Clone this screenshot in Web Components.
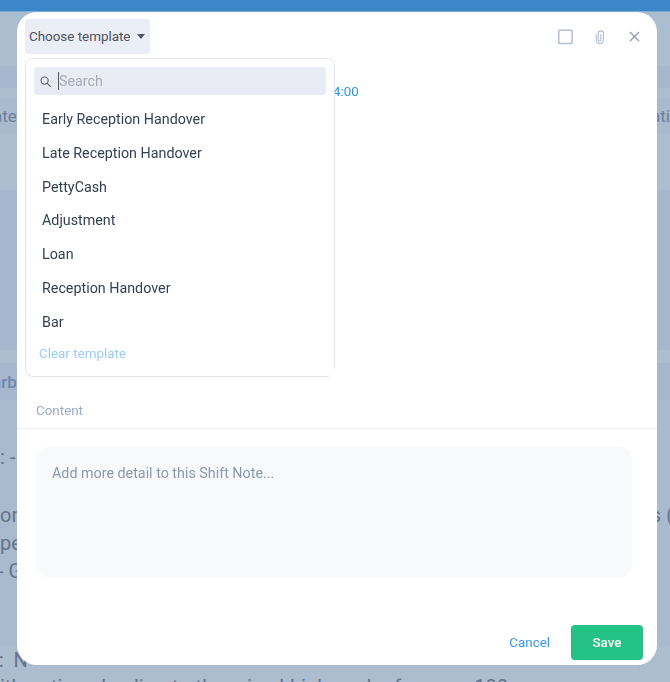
<!DOCTYPE html>
<html>
<head>
<meta charset="utf-8">
<title>Shift Note</title>
<style>
    html, body {
        margin: 0;
        height: 682px;
        overflow: hidden;
        font-family: Roboto, "Liberation Sans", sans-serif;
    }
</style>
</head>
<body>
<page-backdrop>
    <back-row height="54" tone="light"></back-row>
    <back-row height="22" tone="mid"></back-row>
    <back-row height="10" tone="light"></back-row>
    <back-row height="35" tone="soft" small shift="7"><span>ate</span><span slot="end">ati</span></back-row>
    <back-row height="57" tone="light"></back-row>
    <back-row height="160" tone="dark"></back-row>
    <back-row height="13" tone="light"></back-row>
    <back-row height="37" tone="dark" small strong shift="8"><span>arb</span></back-row>
    <back-row height="43" tone="soft"></back-row>
    <back-row height="28" tone="soft"><span>: -</span></back-row>
    <back-row height="30" tone="soft"></back-row>
    <back-row height="28" tone="soft" end-shift="3"><span>or</span><span slot="end">s (</span></back-row>
    <back-row height="28" tone="soft"><span>pe</span></back-row>
    <back-row height="28" tone="soft" shift="2"><span>- G</span></back-row>
    <back-row height="61" tone="soft"></back-row>
    <back-row height="28" tone="light" shift="6"><span>::&nbsp;&nbsp;N</span></back-row>
    <back-row height="26" tone="light" wide><span>ith options leading to the raised high peak of approx 100</span></back-row>
</page-backdrop>

<shift-modal>
    <template-picker slot="picker">
        <picker-item>Early Reception Handover</picker-item>
        <picker-item>Late Reception Handover</picker-item>
        <picker-item>PettyCash</picker-item>
        <picker-item>Adjustment</picker-item>
        <picker-item>Loan</picker-item>
        <picker-item>Reception Handover</picker-item>
        <picker-item>Bar</picker-item>
    </template-picker>
</shift-modal>

<script>
class PageBackdrop extends HTMLElement {
    constructor() {
        super();
        this.attachShadow({ mode: "open" });
        this.shadowRoot.innerHTML = `
            <style>
                :host {
                    display: block;
                    height: 682px;
                    overflow: hidden;
                    background: #adbdd0;
                }
                .bar {
                    height: 11px;
                    background: #3b87c8;
                    border-bottom: 1px solid #7ba9d3;
                }
            </style>
            <div class="bar"></div>
            <slot></slot>
        `;
    }
}

class BackRow extends HTMLElement {
    constructor() {
        super();
        this.attachShadow({ mode: "open" });
        this.shadowRoot.innerHTML = `
            <style>
                :host {
                    display: flex;
                    justify-content: space-between;
                    align-items: center;
                    overflow: hidden;
                    white-space: nowrap;
                    font-size: 20px;
                    line-height: 28px;
                    color: #63748c;
                }
                :host([small]) { font-size: 17px; color: #6c7e98; }
                :host([wide]) { word-spacing: 1px; }
                :host([tone="light"]) { background: #adbdd0; }
                :host([tone="mid"]) { background: #a6b7cd; }
                :host([tone="soft"]) { background: #a9bacf; }
                :host([tone="dark"]) { background: #a5b6cd; }
                :host([strong]) { color: #6f86ad; font-weight: 500; }
            </style>
            <div class="start"><slot></slot></div>
            <div class="end"><slot name="end"></slot></div>
        `;
    }

    connectedCallback() {
        this.style.height = `${this.getAttribute("height")}px`;
        const shift = this.getAttribute("shift");
        if (shift) {
            this.shadowRoot.querySelector(".start").style.marginLeft = `-${shift}px`;
        }
        const endShift = this.getAttribute("end-shift");
        if (endShift) {
            this.shadowRoot.querySelector(".end").style.marginRight = `-${endShift}px`;
        }
    }
}

class ShiftModal extends HTMLElement {
    constructor() {
        super();
        this.attachShadow({ mode: "open" });
        this.shadowRoot.innerHTML = `
            <style>
                :host {
                    position: fixed;
                    left: 17px;
                    top: 12px;
                    width: 640px;
                    height: 653px;
                    display: flex;
                    flex-direction: column;
                    box-sizing: border-box;
                    background: #fff;
                    border-radius: 20px;
                    font-size: 14.3px;
                }
                header {
                    display: flex;
                    align-items: center;
                    justify-content: space-between;
                    padding: 7px 17px 0 8px;
                    height: 35px;
                }
                .choose {
                    display: flex;
                    align-items: center;
                    gap: 7px;
                    width: 125px;
                    height: 35px;
                    box-sizing: border-box;
                    padding-left: 4px;
                    background: #eceef7;
                    border-radius: 4px;
                    color: #4a5160;
                    font-size: 13.4px;
                    white-space: nowrap;
                }
                .caret {
                    width: 0;
                    height: 0;
                    border-left: 4.5px solid transparent;
                    border-right: 4.5px solid transparent;
                    border-top: 5px solid #4f5562;
                }
                .tools {
                    display: flex;
                    align-items: center;
                    gap: 22px;
                }
                .tools svg { display: block; }
                .tools .clip { margin-right: 2px; }
                .time {
                    margin-top: 27px;
                    padding-left: 316px;
                    height: 22px;
                    line-height: 22px;
                    color: #2f93ee;
                    font-size: 13.4px;
                }
                .label {
                    margin-top: 295px;
                    padding-left: 19px;
                    height: 31px;
                    line-height: 26px;
                    color: #9ba9c4;
                    font-size: 13.4px;
                    border-bottom: 1px solid #eef0f4;
                    box-sizing: border-box;
                }
                .detail {
                    margin: 18px 25px 0 19px;
                    height: 130px;
                    box-sizing: border-box;
                    padding: 16px;
                    background: #f8f9fb;
                    border-radius: 12px;
                    color: #8b99b0;
                    font-size: 14.3px;
                    line-height: 20px;
                }
                footer {
                    margin-top: auto;
                    padding: 0 14px 5px 0;
                    display: flex;
                    justify-content: flex-end;
                    align-items: center;
                    gap: 21px;
                }
                .cancel {
                    color: #3a96ee;
                    font-size: 13.4px;
                }
                .save {
                    display: flex;
                    align-items: center;
                    justify-content: center;
                    width: 72px;
                    height: 35px;
                    background: #24c286;
                    border-radius: 4px;
                    color: #fff;
                    font-size: 13.4px;
                    font-weight: 500;
                }
            </style>
            <header>
                <div class="choose">Choose template <span class="caret"></span></div>
                <div class="tools">
                    <svg width="16" height="16" viewBox="0 0 16 16"><rect x="1.7" y="1.2" width="13.4" height="13.4" rx="1" fill="none" stroke="#b0bdd2" stroke-width="1.5"/></svg>
                    <svg class="clip" width="10" height="14" viewBox="0 0 10 14"><path d="M1.2 4.5V10a3.6 3.6 0 0 0 7.2 0V3.5a2.6 2.6 0 0 0-5.2 0v6.3a1.3 1.3 0 0 0 2.6 0V4.5" fill="none" stroke="#aebcd0" stroke-width="1.1" stroke-linecap="round"/></svg>
                    <svg width="11" height="11" viewBox="0 0 11 11"><path d="M1 1l9 9M10 1l-9 9" fill="none" stroke="#8f9fb5" stroke-width="1.4"/></svg>
                </div>
            </header>
            <slot name="picker"></slot>
            <div class="time">4:00</div>
            <div class="label">Content</div>
            <div class="detail">Add more detail to this Shift Note...</div>
            <footer>
                <span class="cancel">Cancel</span>
                <span class="save">Save</span>
            </footer>
        `;
    }
}

class TemplatePicker extends HTMLElement {
    constructor() {
        super();
        this.attachShadow({ mode: "open" });
        this.shadowRoot.innerHTML = `
            <style>
                :host {
                    position: absolute;
                    left: 8px;
                    top: 46px;
                    width: 310px;
                    height: 319px;
                    box-sizing: border-box;
                    padding: 8px 8px 0;
                    display: flex;
                    flex-direction: column;
                    background: #fff;
                    border: 1px solid #e3e6ef;
                    border-radius: 8px;
                    z-index: 2;
                }
                :host::after {
                    content: "";
                    position: absolute;
                    right: -1px;
                    bottom: -1px;
                    width: 5px;
                    height: 9px;
                    background: #fff;
                }
                .search {
                    display: flex;
                    align-items: center;
                    gap: 7px;
                    height: 28px;
                    padding-left: 6px;
                    background: #eaecf5;
                    border-radius: 3px;
                    color: #a7acb8;
                    font-size: 14.3px;
                }
                .search svg { display: block; flex: none; }
                .text {
                    border-left: 1px solid #4f5562;
                    height: 18px;
                    line-height: 18px;
                }
                .list {
                    display: flex;
                    flex-direction: column;
                    margin-top: 8px;
                }
                .clear {
                    margin-top: 5px;
                    padding-left: 5px;
                    color: #9ccbf8;
                    font-size: 13.4px;
                    line-height: 20px;
                }
            </style>
            <div class="search">
                <svg width="11" height="11" viewBox="0 0 11 11"><circle cx="4.6" cy="4.6" r="3.6" fill="none" stroke="#5a606c" stroke-width="1.1"/><path d="M7.3 7.3l3 3" stroke="#5a606c" stroke-width="1.2" stroke-linecap="round"/></svg>
                <div class="text">Search</div>
            </div>
            <div class="list"><slot></slot></div>
            <div class="clear">Clear template</div>
        `;
    }
}

class PickerItem extends HTMLElement {
    constructor() {
        super();
        this.attachShadow({ mode: "open" });
        this.shadowRoot.innerHTML = `
            <style>
                :host {
                    display: block;
                    height: 33.75px;
                    line-height: 33.75px;
                    padding-left: 8px;
                    color: #333f52;
                    font-size: 14.3px;
                }
            </style>
            <slot></slot>
        `;
    }
}

customElements.define("page-backdrop", PageBackdrop);
customElements.define("back-row", BackRow);
customElements.define("shift-modal", ShiftModal);
customElements.define("template-picker", TemplatePicker);
customElements.define("picker-item", PickerItem);
</script>
</body>
</html>
